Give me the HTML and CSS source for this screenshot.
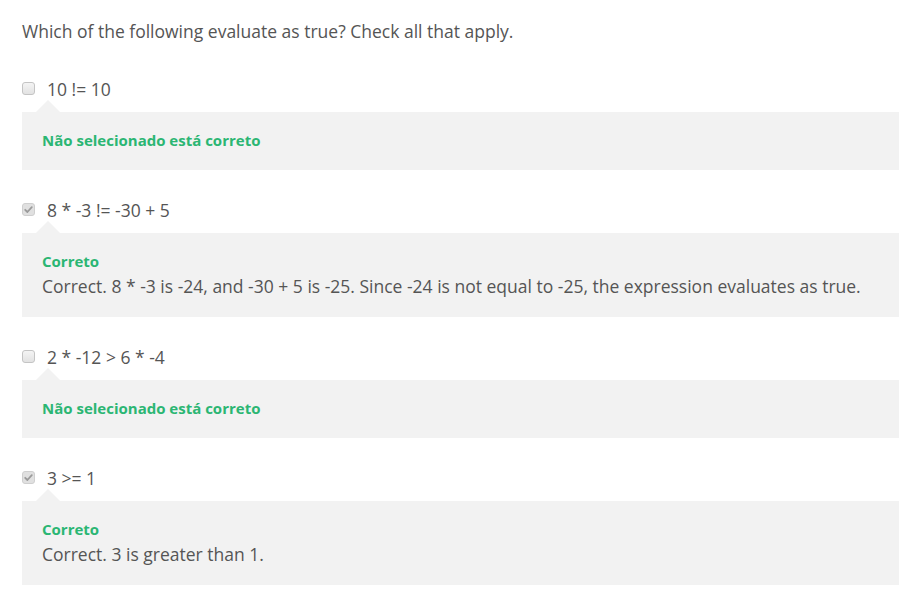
FILE: index.html
```html
<!DOCTYPE html>
<html lang="en">
<head>
<meta charset="utf-8">
<title>Quiz feedback</title>
<link rel="stylesheet" href="styles.css">
</head>
<body>
<main class="quiz">
  <p class="question">Which of the following evaluate as true? Check all that apply.</p>

  <div class="option">
    <div class="option-row">
      <span class="check"></span>
      <span class="option-text">10 != 10</span>
    </div>
    <div class="feedback">
      <div class="feedback-label">Não selecionado está correto</div>
    </div>
  </div>

  <div class="option">
    <div class="option-row">
      <span class="check checked"><svg viewBox="0 0 13 13" width="13" height="13"><path d="M3.2 6.8 L5.4 9 L9.8 4.2" fill="none" stroke="#9a9a9a" stroke-width="1.8" stroke-linecap="round" stroke-linejoin="round"/></svg></span>
      <span class="option-text">8 * -3 != -30 + 5</span>
    </div>
    <div class="feedback">
      <div class="feedback-label">Correto</div>
      <div class="feedback-body">Correct. 8 * -3 is -24, and -30 + 5 is -25. Since -24 is not equal to -25, the expression evaluates as true.</div>
    </div>
  </div>

  <div class="option">
    <div class="option-row">
      <span class="check"></span>
      <span class="option-text">2 * -12 &gt; 6 * -4</span>
    </div>
    <div class="feedback">
      <div class="feedback-label">Não selecionado está correto</div>
    </div>
  </div>

  <div class="option">
    <div class="option-row">
      <span class="check checked"><svg viewBox="0 0 13 13" width="13" height="13"><path d="M3.2 6.8 L5.4 9 L9.8 4.2" fill="none" stroke="#9a9a9a" stroke-width="1.8" stroke-linecap="round" stroke-linejoin="round"/></svg></span>
      <span class="option-text">3 &gt;= 1</span>
    </div>
    <div class="feedback">
      <div class="feedback-label">Correto</div>
      <div class="feedback-body">Correct. 3 is greater than 1.</div>
    </div>
  </div>
</main>
</body>
</html>
```

FILE: styles.css
```css
html, body {
  margin: 0;
  padding: 0;
  background: #ffffff;
}

body {
  font-family: "Open Sans", "Liberation Sans", sans-serif;
  color: #555555;
}

.quiz {
  padding: 19px 0 0 22px;
  display: flex;
  flex-direction: column;
}

.question {
  margin: 0 0 34px;
  font-size: 17.5px;
  line-height: 24px;
}

.option {
  display: flex;
  flex-direction: column;
  margin-bottom: 28px;
}

.option-row {
  display: flex;
  align-items: center;
  gap: 12px;
  font-size: 17.5px;
  line-height: 24px;
  margin-bottom: 11px;
}

.check {
  width: 13px;
  height: 13px;
  box-sizing: border-box;
  border: 1px solid #c4c4c4;
  border-radius: 3px;
  background: linear-gradient(#f4f4f4, #e2e2e2);
  display: flex;
  align-items: center;
  justify-content: center;
  margin-top: -1px;
}

.check svg {
  display: block;
  margin: -1px;
}

.check.checked {
  background: #e0e0e0;
  border-color: #cfcfcf;
}

.feedback {
  position: relative;
  background: #f2f2f2;
  padding: 18px 20px 19px 20px;
}

.feedback::before {
  content: "";
  position: absolute;
  left: 14px;
  top: -12px;
  border-left: 12px solid transparent;
  border-right: 12px solid transparent;
  border-bottom: 12px solid #f2f2f2;
}

.feedback-label {
  color: #2bb673;
  font-weight: 700;
  font-size: 15px;
  line-height: 21px;
}

.feedback-body {
  margin-top: 2px;
  font-size: 17.5px;
  line-height: 24px;
}
```
